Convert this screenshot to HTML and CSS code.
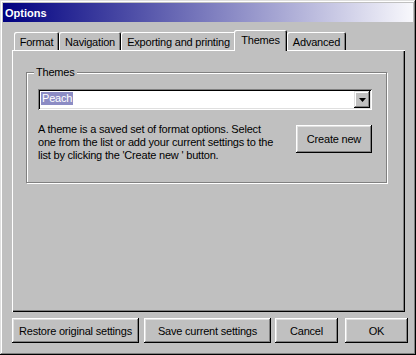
FILE: index.html
```html
<!DOCTYPE html>
<html lang="en">
<head>
    <meta charset="UTF-8">
    <meta name="viewport" content="width=device-width, initial-scale=1.0">
    <title>Options</title>
    <link rel="stylesheet" href="styles.css">
</head>
<body>
    <div class="window">
        <div class="titlebar">Options</div>

        <div class="dialog">
            <div class="tabs">
                <div class="tab tab-format">Format</div>
                <div class="tab tab-nav">Navigation</div>
                <div class="tab tab-export">Exporting and printing</div>
                <div class="tab tab-themes active">Themes</div>
                <div class="tab tab-advanced">Advanced</div>
            </div>

            <div class="panel">
                <div class="groupbox">
                    <span class="legend">Themes</span>

                    <div class="combo">
                        <div class="combo-value"><span class="selected">Peach</span></div>
                        <div class="combo-button">
                            <svg width="7" height="4" viewBox="0 0 7 4"><path d="M0 0h7L3.5 4z" fill="#000"/></svg>
                        </div>
                    </div>

                    <div class="theme-row">
                        <p class="hint">A theme is a saved set of format options. Select<br>one from the list or add your current settings to the<br>list by clicking the 'Create new ' button.</p>
                        <button class="btn btn-create">Create new</button>
                    </div>
                </div>
            </div>

            <div class="actions">
                <button class="btn btn-restore">Restore original settings</button>
                <button class="btn btn-save">Save current settings</button>
                <button class="btn btn-cancel">Cancel</button>
                <button class="btn btn-ok">OK</button>
            </div>
        </div>
    </div>
</body>
</html>
```

FILE: styles.css
```css
body {
    margin: 0;
    font-family: "Liberation Sans", Arial, sans-serif;
    font-size: 11px;
    letter-spacing: -0.2px;
    color: #000;
}
.window {
    width: 416px;
    height: 355px;
    box-sizing: border-box;
    padding: 3px;
    background: #c0c0c0;
    box-shadow: inset -1px -1px #000, inset 1px 1px #dfdfdf, inset -2px -2px #808080, inset 2px 2px #fff;
}
.titlebar {
    height: 19px;
    padding-left: 2px;
    display: flex;
    align-items: center;
    color: #fff;
    font-weight: bold;
    letter-spacing: 0;
    background: linear-gradient(to right, #000080, #f8f8fc);
}
.dialog {
    padding: 8px 0 0 9px;
}

/* tabs */
.tabs {
    display: flex;
    align-items: flex-end;
    height: 20px;
    padding-left: 2px;
}
.tab {
    height: 18px;
    box-sizing: border-box;
    padding-top: 4px;
    line-height: 13px;
    text-align: center;
    white-space: nowrap;
    border-radius: 2px 2px 0 0;
    box-shadow: inset 1px 1px #fff, inset -1px 0 #000, inset -2px 0 #808080;
}
.tab.active {
    height: 21px;
    margin: 0 0 -1px -2px;
    position: relative;
    z-index: 1;
    background: #c0c0c0;
}
.tab-format { width: 45px; }
.tab-nav { width: 62px; }
.tab-export { width: 115px; }
.tab-themes { width: 53px; }
.tab-advanced { width: 59px; }

.panel {
    width: 393px;
    height: 262px;
    box-sizing: border-box;
    padding: 22px 0 0 14px;
    box-shadow: inset 1px 1px #fff, inset -1px -1px #000, inset -2px -2px #808080;
}

/* group box */
.groupbox {
    position: relative;
    width: 361px;
    height: 111px;
    box-sizing: border-box;
    border: 1px solid #808080;
    box-shadow: inset 1px 1px #fff, 1px 1px #fff;
    padding: 16px 0 0 11px;
}
.legend {
    position: absolute;
    top: -7px;
    left: 7px;
    padding: 0 2px;
    line-height: 13px;
    background: #c0c0c0;
}
.combo {
    width: 334px;
    height: 21px;
    box-sizing: border-box;
    padding: 2px;
    display: flex;
    background: #fff;
    box-shadow: inset 1px 1px #808080, inset -1px -1px #fff, inset 2px 2px #000, inset -2px -2px #dfdfdf;
}
.combo-value {
    flex: 1;
    padding: 1px 0 0 1px;
}
.selected {
    display: inline-block;
    padding: 0 1px;
    line-height: 13px;
    background: #8c8cc4;
    color: #fff;
}
.combo-button {
    width: 16px;
    height: 17px;
    display: flex;
    align-items: center;
    justify-content: center;
    background: #c0c0c0;
    box-shadow: inset -1px -1px #000, inset 1px 1px #dfdfdf, inset -2px -2px #808080, inset 2px 2px #fff;
}
.combo-button svg {
    display: block;
}
.theme-row {
    display: flex;
    width: 334px;
    margin-top: 13px;
}
.hint {
    flex: 1;
    margin: 0;
    line-height: 13px;
    white-space: nowrap;
}

/* buttons */
.btn {
    height: 25px;
    padding: 0;
    border: none;
    background: #c0c0c0;
    color: #000;
    font: inherit;
    letter-spacing: inherit;
    box-shadow: inset -1px -1px #000, inset 1px 1px #fff, inset -2px -2px #808080, inset 2px 2px #dfdfdf;
}
.btn-create {
    width: 76px;
    height: 28px;
    margin-top: 2px;
}
.actions {
    display: flex;
    margin-top: 6px;
}
.btn-restore { width: 127px; }
.btn-save { width: 127px; margin-left: 5px; }
.btn-cancel { width: 63px; margin-left: 4px; }
.btn-ok { width: 63px; margin-left: 7px; }
```
